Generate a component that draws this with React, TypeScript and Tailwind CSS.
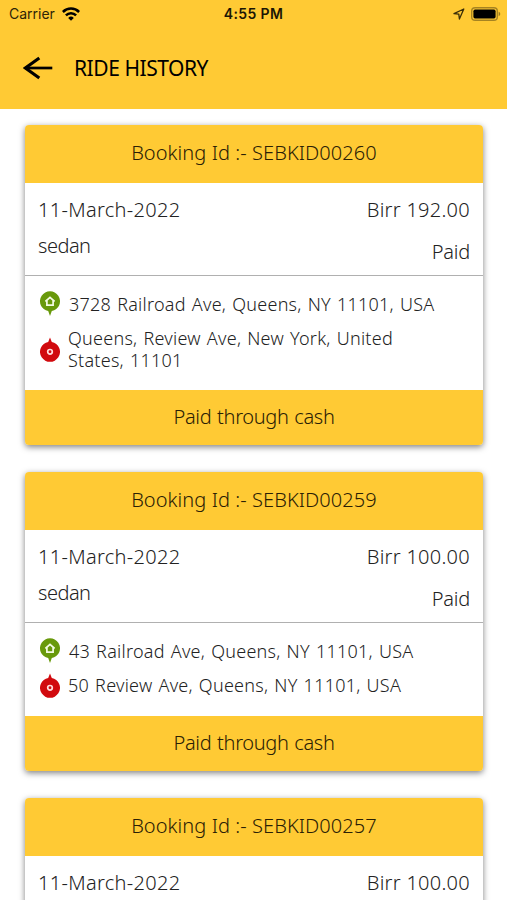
import React, { memo } from 'react';

interface Ride {
    bookingId: string;
    date: string;
    fare: string;
    vehicle?: string;
    status?: string;
    pickup?: string;
    dropoff?: string;
    payment?: string;
}

const rides: Ride[] = [
    {
        bookingId: 'SEBKID00260',
        date: '11-March-2022',
        fare: 'Birr 192.00',
        vehicle: 'sedan',
        status: 'Paid',
        pickup: '3728 Railroad Ave, Queens, NY 11101, USA',
        dropoff: 'Queens, Review Ave, New York, United States, 11101',
        payment: 'Paid through cash',
    },
    {
        bookingId: 'SEBKID00259',
        date: '11-March-2022',
        fare: 'Birr 100.00',
        vehicle: 'sedan',
        status: 'Paid',
        pickup: '43 Railroad Ave, Queens, NY 11101, USA',
        dropoff: '50 Review Ave, Queens, NY 11101, USA',
        payment: 'Paid through cash',
    },
    {
        bookingId: 'SEBKID00257',
        date: '11-March-2022',
        fare: 'Birr 100.00',
    },
];

const WifiIcon = () => (
    <svg width="18" height="14" viewBox="0 0 18 14" fill="none" stroke="#000" strokeWidth="2.5">
        <path d="M.9 5a11.4 11.4 0 0 1 16.2 0" />
        <path d="M3.9 8.4a7.1 7.1 0 0 1 10.2 0" />
        <path d="M9 13.8 6.2 10.9a4 4 0 0 1 5.6 0Z" fill="#000" stroke="none" />
    </svg>
);

const LocationArrowIcon = () => (
    <svg width="12" height="12" viewBox="0 0 12 12" fill="none" stroke="#3a2e08" strokeWidth="1.3" strokeLinejoin="round">
        <path d="M10.8 1 1 5.6l4.8.6.6 4.8Z" />
    </svg>
);

const BatteryIcon = () => (
    <svg width="30" height="14" viewBox="0 0 30 14">
        <rect x="0.7" y="0.7" width="25.6" height="12.6" rx="3.4" fill="none" stroke="#000" strokeOpacity="0.35" strokeWidth="1.4" />
        <rect x="2.4" y="2.6" width="22.2" height="8.8" rx="1.6" fill="#000" />
        <path d="M27.6 4.8c2.2.7 2.2 3.7 0 4.4Z" fill="#000" fillOpacity="0.4" />
    </svg>
);

const BackIcon = () => (
    <svg width="30" height="24" viewBox="0 0 30 24" fill="none" stroke="#000" strokeWidth="2.7">
        <path d="M29.3 12H2" />
        <path d="M16.3 2 2.4 12l13.9 10" strokeWidth="3.1" />
    </svg>
);

const PickupPin = () => (
    <svg width="20" height="26" viewBox="0 0 20 26" className="shrink-0">
        <path d="M10 25 8.2 20.1a10 10 0 1 1 3.6 0Z" fill="#68990b" />
        <path d="m5.4 10.5 4.6-4.1 4.6 4.1M6.9 9.6v4.6h6.2V9.6" fill="none" stroke="#f4fbe4" strokeWidth="1.7" />
    </svg>
);

const DropoffPin = () => (
    <svg width="20" height="26" viewBox="0 0 20 26" className="shrink-0">
        <path d="M10 .5 11.8 5a10 10 0 1 1-3.6 0Z" fill="#d10a0e" />
        <circle cx="10" cy="14.8" r="2.3" fill="none" stroke="#ffdede" strokeWidth="1.7" />
    </svg>
);

const StatusBar = () => (
    <div className="relative flex h-[27px] items-center justify-between pr-[6px] pl-[9px] font-['Inter',sans-serif]">
        <div className="flex items-center gap-[7px]">
            <span className="text-[14px] text-[#2e2407]">Carrier</span>
            <WifiIcon />
        </div>
        <span className="absolute inset-x-0 text-center text-[14px] font-semibold tracking-[0.35px] text-[#1c1604]">4:55 PM</span>
        <div className="flex items-center gap-[6px]">
            <LocationArrowIcon />
            <BatteryIcon />
        </div>
    </div>
);

const RideCard = memo<{ ride: Ride }>(({ ride }) => (
    <div className="overflow-hidden rounded-[4px] bg-white text-[20px] leading-[22px] font-light text-[#222] shadow-[0_2px_6px_rgba(0,0,0,0.5)]">
        <div className="flex h-[58px] items-center justify-center bg-[#ffca34] pb-[2px] text-[#2a2005]">
            <span className="tracking-[0.08px]">Booking Id :- {ride.bookingId}</span>
        </div>

        <div className="flex h-[93px] justify-between border-b border-[#b0b0b0] px-[13px] pt-[16px]">
            <div className="flex flex-col gap-[14px]">
                <span className="tracking-[0.3px]">{ride.date}</span>
                {ride.vehicle && <span className="tracking-[-0.5px]">{ride.vehicle}</span>}
            </div>
            <div className="flex flex-col items-end gap-[20px]">
                <span className="tracking-[0.27px]">{ride.fare}</span>
                {ride.status && <span className="tracking-[-0.2px]">{ride.status}</span>}
            </div>
        </div>

        {ride.pickup && (
            <div className="flex flex-col gap-[9px] px-[15px] pt-[15px] pb-[17px] text-[18px] tracking-[0.25px] [word-spacing:1.1px]">
                <div className="flex items-center gap-[9px]">
                    <PickupPin />
                    <span className="whitespace-nowrap">{ride.pickup}</span>
                </div>
                <div className="flex items-center gap-[8px]">
                    <DropoffPin />
                    <span className="max-w-[350px] py-[2px] leading-[21.5px]">{ride.dropoff}</span>
                </div>
            </div>
        )}

        {ride.payment && (
            <div className="flex h-[55px] items-center justify-center bg-[#ffca34] pb-px text-[#2a2005]">
                <span className="tracking-[-0.35px] [word-spacing:1px]">{ride.payment}</span>
            </div>
        )}
    </div>
));
RideCard.displayName = 'RideCard';

const App = () => (
    <div className="h-[900px] w-full overflow-hidden bg-white font-['Noto_Sans',sans-serif]">
        {/* Header */}
        <div className="h-[109px] bg-[#ffca34]">
            <StatusBar />
            <div className="flex h-[82px] items-center gap-[21px] pl-[23px]">
                <BackIcon />
                <h1 className="pt-px text-[21px] tracking-[-0.45px] text-black">RIDE HISTORY</h1>
            </div>
        </div>

        {/* Ride list */}
        <div className="flex flex-col gap-[27px] pt-[16px] pr-[24px] pl-[25px]">
            {rides.map(ride => (
                <RideCard key={ride.bookingId} ride={ride} />
            ))}
        </div>
    </div>
);

export default App;
